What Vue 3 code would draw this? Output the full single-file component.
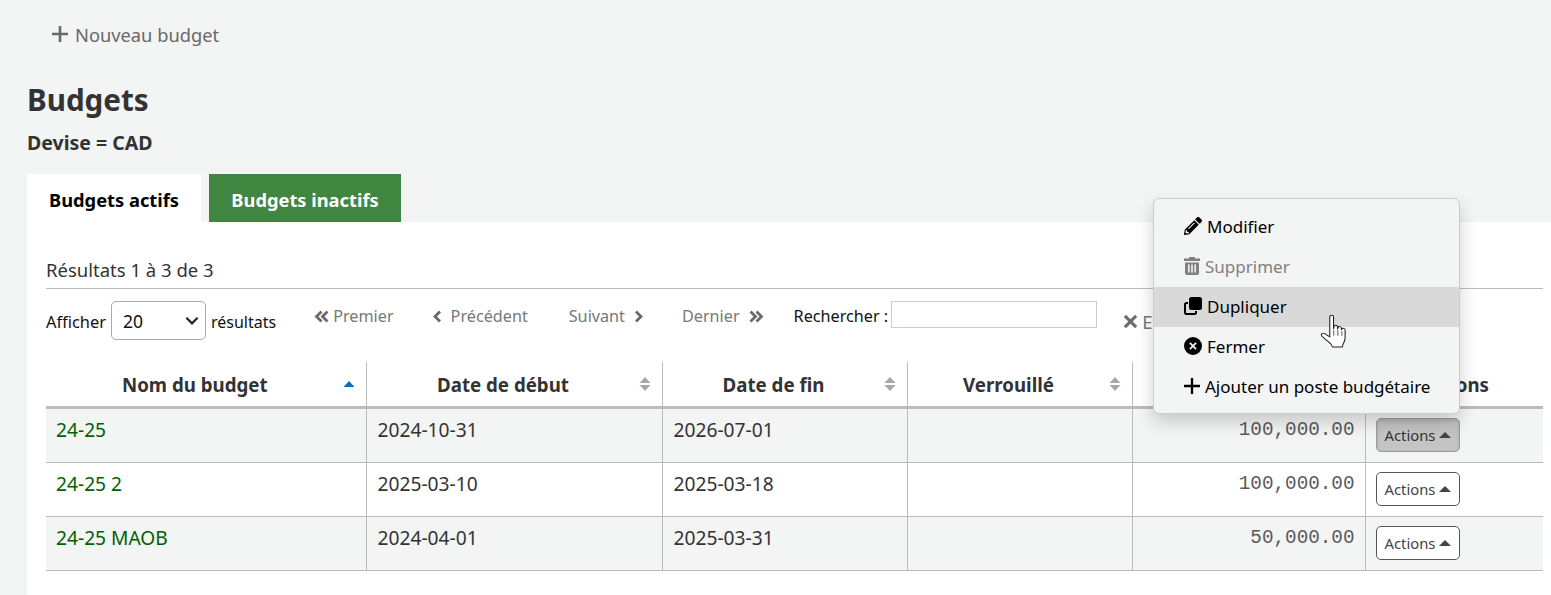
<script setup>
const columns = [
  { label: 'Nom du budget', width: 320, sort: 'asc' },
  { label: 'Date de début', width: 296, sort: 'both' },
  { label: 'Date de fin', width: 245, sort: 'both' },
  { label: 'Verrouillé', width: 225, sort: 'both' },
  { label: 'Montant', width: 233, sort: 'both' },
  { label: 'Actions', width: 178, sort: 'none' },
]
const rows = [
  { name: '24-25', start: '2024-10-31', end: '2026-07-01', amount: '100,000.00', open: true },
  { name: '24-25 2', start: '2025-03-10', end: '2025-03-18', amount: '100,000.00' },
  { name: '24-25 MAOB', start: '2024-04-01', end: '2025-03-31', amount: '50,000.00' },
]
</script>

<template>
  <div class="page">
    <div class="toolbar">
      <a class="new-link">
        <svg class="ico-plus" viewBox="0 0 16 16"><path d="M8 0v16M0 8h16" /></svg>
        Nouveau budget
      </a>
    </div>
    <h1>Budgets</h1>
    <p class="currency">Devise = CAD</p>

    <div class="tabs">
      <div class="tab active">Budgets actifs</div>
      <div class="tab">Budgets inactifs</div>
    </div>

    <section class="panel">
      <div class="info">Résultats 1 à 3 de 3</div>
      <div class="pager">
        <label class="length">
          Afficher
          <span class="select">20
            <svg viewBox="0 0 12 8" width="14" height="9"><path d="M1 1.500l5 5 5-5" fill="none" stroke="#222" stroke-width="2" /></svg>
          </span>
          <span class="len-after">résultats</span>
        </label>
        <nav class="pages">
          <span class="pg first">
            <svg class="chev" viewBox="0 0 16 12"><path d="M7.500 1L2.500 6l5 5M13.500 1L8.500 6l5 5" /></svg>Premier
          </span>
          <span class="pg prev">
            <svg class="chev one" viewBox="0 0 9 12"><path d="M7 1L2 6l5 5" /></svg>Précédent
          </span>
          <span class="pg next">
            Suivant<svg class="chev one" viewBox="0 0 9 12"><path d="M2 1l5 5-5 5" /></svg>
          </span>
          <span class="pg last">
            Dernier<svg class="chev" viewBox="0 0 16 12"><path d="M2.500 1l5 5-5 5M8.500 1l5 5-5 5" /></svg>
          </span>
        </nav>
        <label class="search">Rechercher :<span class="input"></span></label>
        <span class="clear">
          <svg viewBox="0 0 12 12" width="15" height="15"><path d="M1.500 1.500l9 9M10.500 1.500l-9 9" fill="none" stroke="#6b6b6b" stroke-width="2.400" /></svg>
          Effacer
        </span>
      </div>

      <table>
        <colgroup>
          <col v-for="c in columns" :key="c.label" :style="{ width: c.width + 'px' }" />
        </colgroup>
        <thead>
          <tr>
            <th v-for="c in columns" :key="c.label">
              {{ c.label }}
              <svg v-if="c.sort === 'asc'" class="sort" viewBox="0 0 12 14"><path d="M6 4l5.500 6H.5z" fill="#0a6ebd" /></svg>
              <svg v-else-if="c.sort === 'both'" class="sort" viewBox="0 0 12 14"><path d="M6 0l5.500 6H.5zM6 14L.5 8h11z" fill="#a8a8a8" /></svg>
            </th>
          </tr>
        </thead>
        <tbody>
          <tr v-for="r in rows" :key="r.name">
            <td><a class="budget">{{ r.name }}</a></td>
            <td>{{ r.start }}</td>
            <td>{{ r.end }}</td>
            <td></td>
            <td class="amount">{{ r.amount }}</td>
            <td class="act">
              <button :class="['btn', { on: r.open }]">Actions<i class="caret"></i></button>
            </td>
          </tr>
        </tbody>
      </table>
    </section>

    <ul class="menu">
      <li>
        <svg class="mi" viewBox="0 0 512 512"><path d="M497.900 142.100l-46.100 46.100c-4.700 4.700-12.300 4.700-17 0l-111-111c-4.700-4.700-4.700-12.300 0-17l46.100-46.100c18.700-18.700 49.100-18.700 67.900 0l60.100 60.100c18.800 18.700 18.800 49.100 0 67.900zM284.200 99.800L21.600 362.400.4 483.900c-2.900 16.400 11.400 30.600 27.800 27.800l121.500-21.300 262.600-262.600c4.700-4.700 4.700-12.300 0-17l-111-111c-4.800-4.700-12.400-4.700-17.100 0zM124.100 339.900c-5.500-5.500-5.500-14.300 0-19.800l154-154c5.500-5.500 14.300-5.500 19.800 0s5.500 14.300 0 19.800l-154 154c-5.500 5.500-14.300 5.500-19.800 0zM88 424h48v36.300l-64.500 11.300-31.100-31.100L51.700 376H88v48z" /></svg>
        Modifier
      </li>
      <li class="disabled">
        <svg class="mi narrow" viewBox="0 0 16 18"><path d="M5.500 0h5l.7 1.500H16V4H0V1.500h4.800zM1 5.500h14V16a2 2 0 0 1-2 2H3a2 2 0 0 1-2-2zM4 7.500v8h1.600v-8zM7.200 7.500v8h1.600v-8zM10.400 7.500v8H12v-8z" fill-rule="evenodd" /></svg>
        Supprimer
      </li>
      <li class="hover">
        <svg class="mi" viewBox="0 0 18 18"><path d="M7.500 0H15.500A2.500 2.500 0 0 1 18 2.500V10.500A2.500 2.500 0 0 1 15.500 13H7.500A2.500 2.500 0 0 1 5 10.500V2.500A2.500 2.500 0 0 1 7.500 0zM0 7.500A2.500 2.500 0 0 1 2.500 5H4V7H2.500A.5.5 0 0 0 2 7.500V15.500A.5.5 0 0 0 2.500 16H10.500A.5.5 0 0 0 11 15.500V14H13V15.500A2.500 2.500 0 0 1 10.500 18H2.500A2.500 2.500 0 0 1 0 15.500z" /></svg>
        Dupliquer
      </li>
      <li>
        <svg class="mi" viewBox="0 0 18 18"><path fill-rule="evenodd" d="M9 0a9 9 0 1 1 0 18A9 9 0 0 1 9 0zM6.500 5.300L5.300 6.500 7.800 9l-2.500 2.500 1.200 1.200L9 10.200l2.500 2.500 1.200-1.200L10.200 9l2.500-2.500-1.200-1.200L9 7.800z" /></svg>
        Fermer
      </li>
      <li>
        <svg class="mi plus" viewBox="0 0 16 16"><path d="M8 0v16M0 8h16" fill="none" stroke="currentColor" stroke-width="2.300" /></svg>
        Ajouter un poste budgétaire
      </li>
    </ul>

    <svg class="cursor" viewBox="0 0 26 34" width="35" height="39" preserveAspectRatio="none">
      <path d="M8 2.500c0-1.800 2.800-1.800 2.800 0V13l.4-2.200c.3-1.500 2.500-1.300 2.500.3v2l.5-1.300c.5-1.300 2.400-1 2.400.5v1.500l.5-.8c.7-1 2.300-.6 2.300.8v7c0 2-.6 3.500-1.300 5-.5 1.200-.7 2-.7 3H10c-.2-1.500-1-2.700-2.400-4C6 23.500 3.500 21 2 19c-1-1.500.8-3 2.200-1.900L8 20z" fill="#fff" stroke="#222" stroke-width=".8" stroke-linejoin="round" />
      <path d="M11 14v5M14 14v5M17 15v4" stroke="#222" stroke-width=".6" fill="none" />
    </svg>
  </div>
</template>

<style>
html, body { margin: 0; background: #f3f4f4; }
</style>

<style scoped>
.page {
  position: relative;
  height: 595px;
  overflow: hidden;
  padding: 0 0 0 27px;
  box-sizing: border-box;
  font-family: "Noto Sans", "Open Sans", sans-serif;
  font-size: 18.500px;
  color: #333;
  background: #f3f4f4;
}
.toolbar { height: 68px; padding: 0 0 0 25px; display: flex; align-items: center; }
.new-link { color: #696969; display: flex; align-items: center; font-size: 18.300px; }
.ico-plus { width: 16px; height: 16px; fill: none; stroke: #696969; stroke-width: 2.600; margin-right: 7px; }
h1 { margin: 14px 0 0; font-size: 29.600px; line-height: 36px; font-weight: 700; color: #333; }
.currency { margin: 13px 0 0; font-size: 19.500px; line-height: 24px; font-weight: 700; }
.tabs { display: flex; margin-top: 19px; height: 48px; gap: 8px; }
.tab {
  display: flex; align-items: center; justify-content: center; padding-top: 3px; box-sizing: border-box;
  background: #408540; color: #fff; font-weight: 700; font-size: 18.300px;
  width: 192px;
}
.tab.active { background: #fff; color: #000; width: 174px; }
.panel { background: #fff; height: 373px; padding: 0 8px 0 19px; }
.info {
  height: 67px; box-sizing: border-box; padding-top: 34px; line-height: 28px;
  border-bottom: 1px solid #bbb;
  font-size: 18.500px;
}
.pager { display: flex; height: 73px; align-items: flex-start; white-space: nowrap; }
.length { display: flex; align-items: center; height: 41px; margin-top: 12px; color: #111; gap: 5px; font-size: 16.400px; }
.len-after { font-size: 16px; }
.select {
  width: 95px; height: 39px; box-sizing: border-box; display: flex; align-items: center; justify-content: space-between;
  border: 1px solid #aaa; border-radius: 5px; padding: 0 6px 0 11px; background: #fff; font-size: 17.500px; margin-bottom: 2px;
}
.pages { display: flex; height: 28px; margin-top: 13px; margin-left: 38px; color: #777; font-size: 16.200px; }
.pg { display: flex; align-items: center; }
.chev { width: 16px; height: 13px; fill: none; stroke: #6a6a6a; stroke-width: 2.800; margin: 0 3px 0 0; }
.chev.one { width: 9px; margin: 0 9px 0 0; }
.next .chev.one { margin: 0 0 0 9px; }
.last .chev { margin: 0 0 0 8px; }
.prev { margin-left: 39px; }
.next { margin-left: 41px; }
.last { margin-left: 39px; }
.search { display: flex; align-items: center; height: 30px; margin: 12px 0 0 30px; color: #111; font-size: 16.200px; }
.input { width: 204px; height: 25px; border: 1px solid #ccc; margin: 0 0 3px 3px; background: #fff; display: block; }
.clear { display: flex; align-items: center; gap: 4px; margin: 24px 0 0 26px; height: 16px; color: #777; }
table { width: 1497px; border-collapse: collapse; table-layout: fixed; }
th {
  position: relative; height: 45px; padding: 2px 27px 0 5px; text-align: center; font-weight: 700; color: #333;
  border-left: 1px solid #bbb; border-bottom: 3px solid #bbb; box-sizing: border-box; font-size: 18.700px;
}
th:last-child { padding: 2px 0 0; }
th:first-child, td:first-child { border-left: none; }
.sort { position: absolute; right: 11px; top: 15px; width: 12px; height: 14px; }
td {
  height: 54px; padding: 7px 10px 0 11px; vertical-align: top; box-sizing: border-box;
  border-left: 1px solid #bbb; border-bottom: 1px solid #bbb; line-height: 28px; color: #333; font-size: 19.200px;
}
tbody tr:first-child td { height: 55px; }
td:first-child { padding-left: 10px; }
tbody tr:nth-child(odd) td { background: #f3f4f4; }
.budget { color: #006100; }
.amount { text-align: right; font-family: "Liberation Mono", monospace; font-size: 19.300px; color: #5a5a5a; }
.act { padding-top: 9px; padding-left: 10px; }
.btn {
  display: flex; align-items: center; width: 84px; height: 34px; padding: 0 0 0 8px; box-sizing: border-box;
  font: 14.800px "Noto Sans", sans-serif; color: #444; background: #fff; border: 1px solid #555; border-radius: 5px;
}
.btn.on { background: #c4c4c4; border-color: #999; color: #333; box-shadow: inset 0 2px 4px rgba(0,0,0,.12); }
.caret { width: 0; height: 0; margin-left: 4px; border: 6px solid transparent; border-top: 0; border-bottom: 6px solid #444; }
.menu {
  position: absolute; left: 1153px; top: 198px; width: 307px; height: 216px; box-sizing: border-box; margin: 0; padding: 8px 0;
  list-style: none; background: #f3f4f4; border: 1px solid #ccc; border-radius: 6px;
  box-shadow: 0 8px 18px rgba(0,0,0,.18); color: #000; font-size: 17px;
}
.menu li { height: 40px; display: flex; align-items: center; padding: 0 0 2px 30px; box-sizing: border-box; white-space: nowrap; }
.menu li.hover { background: #d9d9d9; }
.menu li.disabled { color: #808080; }
.mi { width: 18px; height: 18px; margin-right: 5px; fill: currentColor; flex: none; }
.mi.narrow { width: 16px; margin-right: 5px; }
.mi.plus { width: 16px; }
.cursor { position: absolute; left: 1319px; top: 314px; }
</style>
